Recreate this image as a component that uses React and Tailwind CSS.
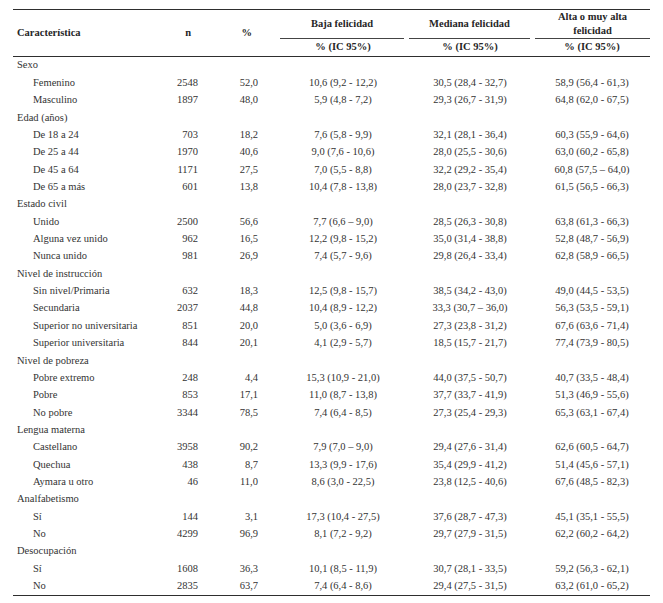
const groups = [
  {
    title: 'Sexo',
    rows: [
      ['Femenino', '2548', '52,0', '10,6 (9,2 - 12,2)', '30,5 (28,4 - 32,7)', '58,9 (56,4 - 61,3)'],
      ['Masculino', '1897', '48,0', '5,9 (4,8 - 7,2)', '29,3 (26,7 - 31,9)', '64,8 (62,0 - 67,5)'],
    ],
  },
  {
    title: 'Edad (años)',
    rows: [
      ['De 18 a 24', '703', '18,2', '7,6 (5,8 - 9,9)', '32,1 (28,1 - 36,4)', '60,3 (55,9 - 64,6)'],
      ['De 25 a 44', '1970', '40,6', '9,0 (7,6 - 10,6)', '28,0 (25,5 - 30,6)', '63,0 (60,2 - 65,8)'],
      ['De 45 a 64', '1171', '27,5', '7,0 (5,5 - 8,8)', '32,2 (29,2 - 35,4)', '60,8 (57,5 – 64,0)'],
      ['De 65 a más', '601', '13,8', '10,4 (7,8 - 13,8)', '28,0 (23,7 - 32,8)', '61,5 (56,5 - 66,3)'],
    ],
  },
  {
    title: 'Estado civil',
    rows: [
      ['Unido', '2500', '56,6', '7,7 (6,6 – 9,0)', '28,5 (26,3 - 30,8)', '63,8 (61,3 - 66,3)'],
      ['Alguna vez unido', '962', '16,5', '12,2 (9,8 - 15,2)', '35,0 (31,4 - 38,8)', '52,8 (48,7 - 56,9)'],
      ['Nunca unido', '981', '26,9', '7,4 (5,7 - 9,6)', '29,8 (26,4 - 33,4)', '62,8 (58,9 - 66,5)'],
    ],
  },
  {
    title: 'Nivel de instrucción',
    rows: [
      ['Sin nivel/Primaria', '632', '18,3', '12,5 (9,8 - 15,7)', '38,5 (34,2 - 43,0)', '49,0 (44,5 - 53,5)'],
      ['Secundaria', '2037', '44,8', '10,4 (8,9 - 12,2)', '33,3 (30,7 – 36,0)', '56,3 (53,5 - 59,1)'],
      ['Superior no universitaria', '851', '20,0', '5,0 (3,6 - 6,9)', '27,3 (23,8 - 31,2)', '67,6 (63,6 - 71,4)'],
      ['Superior universitaria', '844', '20,1', '4,1 (2,9 - 5,7)', '18,5 (15,7 - 21,7)', '77,4 (73,9 - 80,5)'],
    ],
  },
  {
    title: 'Nivel de pobreza',
    rows: [
      ['Pobre extremo', '248', '4,4', '15,3 (10,9 - 21,0)', '44,0 (37,5 - 50,7)', '40,7 (33,5 - 48,4)'],
      ['Pobre', '853', '17,1', '11,0 (8,7 - 13,8)', '37,7 (33,7 - 41,9)', '51,3 (46,9 - 55,6)'],
      ['No pobre', '3344', '78,5', '7,4 (6,4 - 8,5)', '27,3 (25,4 - 29,3)', '65,3 (63,1 - 67,4)'],
    ],
  },
  {
    title: 'Lengua materna',
    rows: [
      ['Castellano', '3958', '90,2', '7,9 (7,0 – 9,0)', '29,4 (27,6 - 31,4)', '62,6 (60,5 - 64,7)'],
      ['Quechua', '438', '8,7', '13,3 (9,9 - 17,6)', '35,4 (29,9 - 41,2)', '51,4 (45,6 - 57,1)'],
      ['Aymara u otro', '46', '11,0', '8,6 (3,0 - 22,5)', '23,8 (12,5 - 40,6)', '67,6 (48,5 - 82,3)'],
    ],
  },
  {
    title: 'Analfabetismo',
    rows: [
      ['Sí', '144', '3,1', '17,3 (10,4 - 27,5)', '37,6 (28,7 - 47,3)', '45,1 (35,1 - 55,5)'],
      ['No', '4299', '96,9', '8,1 (7,2 - 9,2)', '29,7 (27,9 - 31,5)', '62,2 (60,2 - 64,2)'],
    ],
  },
  {
    title: 'Desocupación',
    rows: [
      ['Sí', '1608', '36,3', '10,1 (8,5 - 11,9)', '30,7 (28,1 - 33,5)', '59,2 (56,3 - 62,1)'],
      ['No', '2835', '63,7', '7,4 (6,4 - 8,6)', '29,4 (27,5 - 31,5)', '63,2 (61,0 - 65,2)'],
    ],
  },
];

const cols = 'grid grid-cols-[137px_56px_70px_130px_126px_118px]';

function Row({ cells }) {
  const [label, n, pct, baja, mediana, alta] = cells;
  return (
    <div className={`${cols} h-[17.37px] items-center`}>
      <div className="pl-[20px] whitespace-nowrap">{label}</div>
      <div className="pr-[8px] text-right">{n}</div>
      <div className="pr-[18px] text-right">{pct}</div>
      <div className="text-center pl-[4px]">{baja}</div>
      <div className="text-center pl-[2px]">{mediana}</div>
      <div className="text-center pl-[2px]">{alta}</div>
    </div>
  );
}

export default function App() {
  return (
    <div className="min-h-screen bg-white pl-[13px] pt-[9px] text-[10.5px] leading-none text-[#333] font-['Liberation_Serif',serif]">
      <div className="w-[637px]">
        {/* Encabezado */}
        <div className={`${cols} grid-rows-[29px_17px] border-t border-b border-[#2e2e2e] font-bold text-[#262626]`}>
          <div className="row-span-2 flex items-center pl-[4px]">Característica</div>
          <div className="row-span-2 flex items-center justify-end pr-[15px]">n</div>
          <div className="row-span-2 flex items-center justify-end pr-[24px]">%</div>
          <div className="ml-[4px] mr-[2px] flex items-center justify-center border-b border-[#444]">Baja felicidad</div>
          <div className="ml-[3px] mr-[2px] flex items-center justify-center border-b border-[#444]">Mediana felicidad</div>
          <div className="ml-[3px] flex items-center justify-center border-b border-[#444] text-center leading-[14px]">
            Alta o muy alta
            <br />
            felicidad
          </div>
          <div className="flex items-center justify-center pl-[4px]">% (IC 95%)</div>
          <div className="flex items-center justify-center pl-[2px]">% (IC 95%)</div>
          <div className="flex items-center justify-center pl-[2px]">% (IC 95%)</div>
        </div>

        {/* Cuerpo */}
        <div className="border-b border-[#2e2e2e]">
          {groups.map((g) => (
            <div key={g.title}>
              <div className="h-[17.37px] flex items-center pl-[4px]">{g.title}</div>
              {g.rows.map((r) => (
                <Row key={g.title + r[0]} cells={r} />
              ))}
            </div>
          ))}
        </div>
      </div>
    </div>
  );
}
